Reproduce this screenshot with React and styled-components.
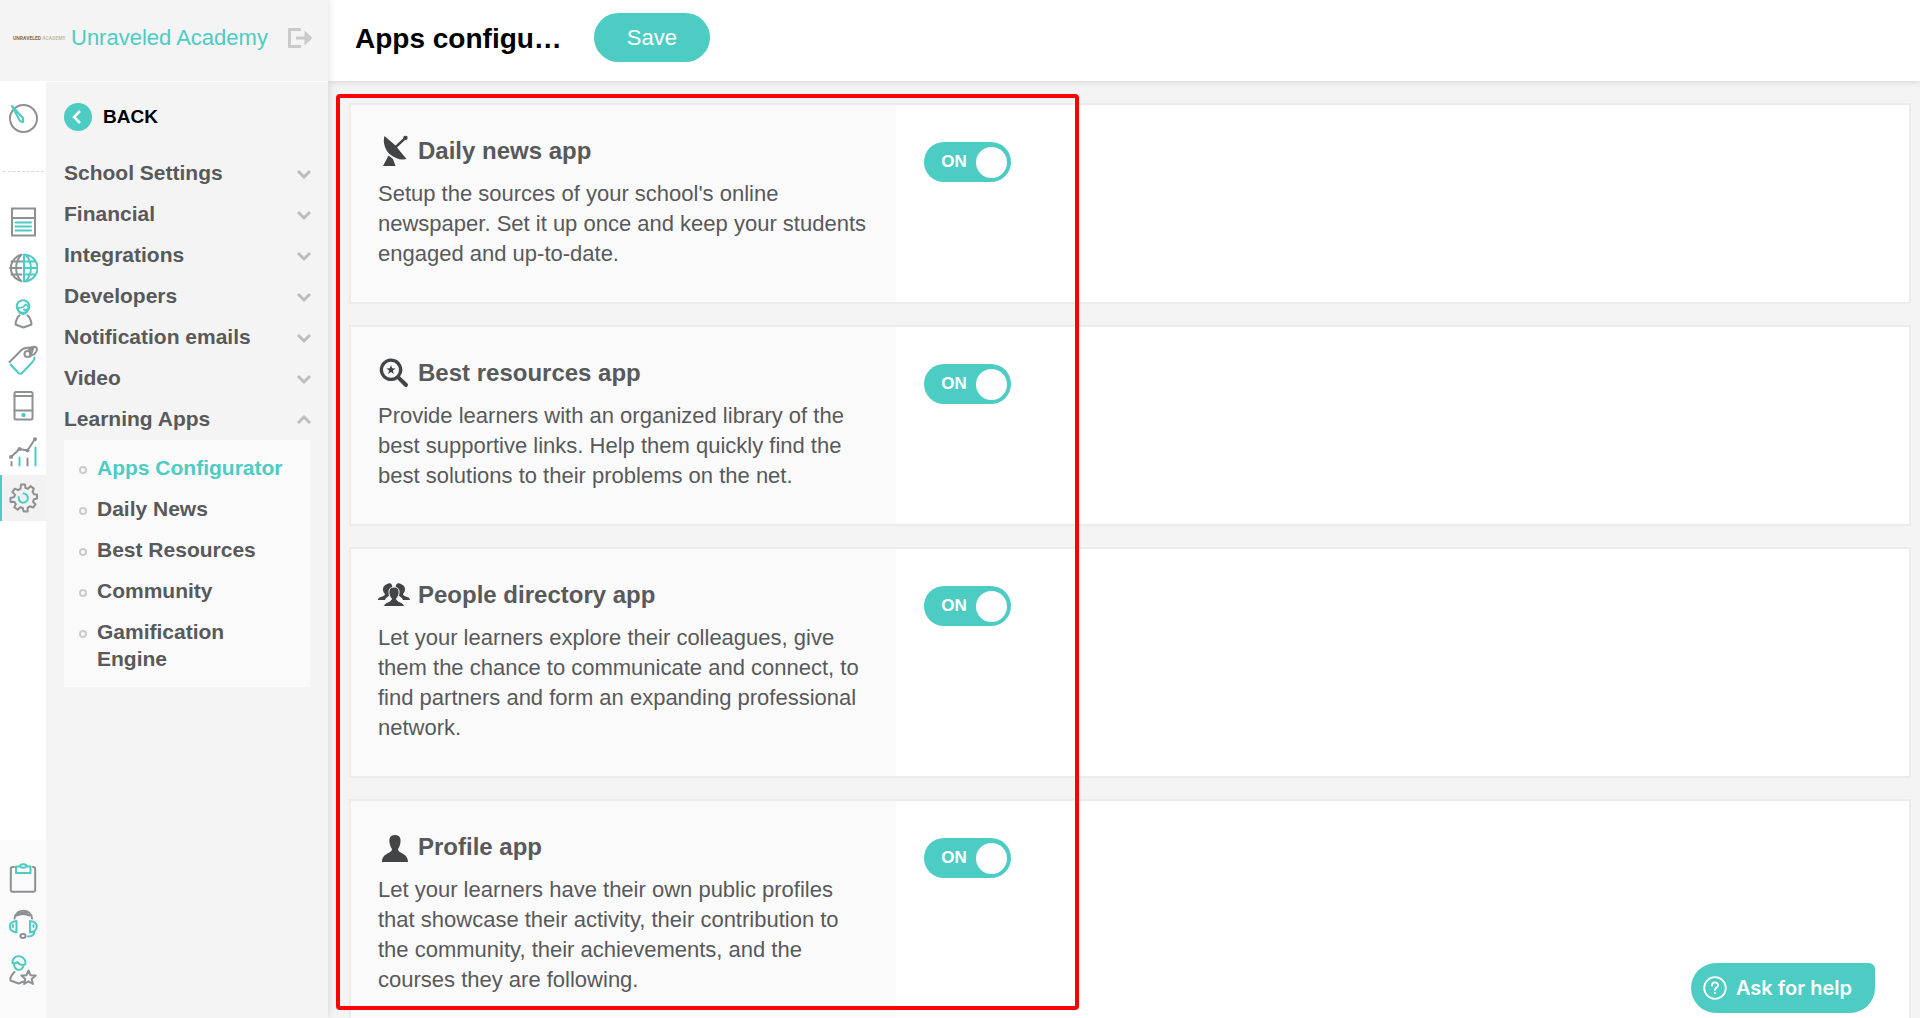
import { useState } from 'react'
import styled, { createGlobalStyle } from 'styled-components'

const colors = {
    primary: '#4dccc3',
    text: '#58595a',
    panel: '#f4f4f4',
    light: '#fafafa',
    border: '#ececec',
    grey: '#8e9093',
    muted: '#c3c3c3',
}

const GlobalStyle = createGlobalStyle`
    *, *::before, *::after {
        box-sizing: border-box;
    }
    body {
        margin: 0;
        font-family: "Helvetica Neue", "Liberation Sans", Arial, sans-serif;
        color: ${colors.text};
    }
    a {
        color: inherit;
        text-decoration: none;
    }
    button {
        font-family: inherit;
        border: none;
        cursor: pointer;
    }
`

const Page = styled.div`
    display: flex;
    height: 100vh;
    overflow: hidden;
    background: ${colors.panel};
`

const Sidebar = styled.aside`
    display: flex;
    flex-direction: column;
    flex: 0 0 328px;
    background: ${colors.panel};
    box-shadow: 0 0 8px rgba(0, 0, 0, 0.14);
    z-index: 2;
`

const SchoolBar = styled.div`
    display: flex;
    align-items: center;
    height: 82px;
    padding: 0 15px 6px 13px;
    border-bottom: 1px solid #fff;
`

const Logo = styled.span`
    flex: 0 0 58px;
    font-family: Roboto, "Liberation Sans", sans-serif;
    font-size: 5px;
    font-weight: bold;
    line-height: 6px;
    white-space: nowrap;
    color: #8a6d45;
    & > span {
        color: #c8bda9;
    }
`

const SchoolName = styled.a`
    flex: 1;
    font-size: 22px;
    line-height: 28px;
    white-space: nowrap;
    color: ${colors.primary};
`

const IconButton = styled.button`
    display: flex;
    padding: 0;
    background: none;
`

const SidebarBody = styled.div`
    display: flex;
    flex: 1;
    min-height: 0;
`

const Rail = styled.nav`
    display: flex;
    flex-direction: column;
    flex: 0 0 46px;
    background: #fff;
`

const RailTop = styled.div`
    display: flex;
    flex-direction: column;
    padding-top: 13px;
`

const RailDivider = styled.hr`
    width: 41px;
    margin: 30px auto 27px;
    border: none;
    border-top: 1px dashed #d8d8d8;
`

const RailBottom = styled.div`
    margin-top: auto;
    padding: 15px 0 25px;
    background: ${colors.light};
`

const RailLink = styled.a`
    display: flex;
    align-items: center;
    justify-content: center;
    height: 46px;
    background: ${({ $active }) => ($active ? '#f2f2f2' : 'transparent')};
    box-shadow: ${({ $active }) => ($active ? `inset 2px 0 0 ${colors.primary}` : 'none')};
`

const LineIcon = styled.svg`
    width: 30px;
    height: 30px;
    fill: none;
    stroke: ${colors.grey};
    stroke-width: 2;
    stroke-linejoin: round;
    stroke-linecap: round;
    .teal {
        stroke: ${colors.primary};
    }
    .dot {
        fill: ${colors.primary};
        stroke: none;
    }
    .node {
        fill: ${colors.grey};
        stroke: none;
    }
`

const Menu = styled.nav`
    flex: 1;
    padding: 0 18px;
`

const BackLink = styled.a`
    display: flex;
    align-items: center;
    gap: 11px;
    height: 70px;
    font-size: 19px;
    font-weight: bold;
    color: #000;
`

const MenuButton = styled.button`
    display: flex;
    align-items: center;
    justify-content: space-between;
    width: 100%;
    height: 41px;
    padding: 0;
    background: none;
    font-size: 21px;
    font-weight: bold;
    color: ${colors.text};
    & > svg {
        margin-right: -3px;
    }
`

const SubMenu = styled.ul`
    display: flex;
    flex-direction: column;
    gap: 14px;
    margin: 1px 0 0;
    padding: 14px 15px 15px;
    list-style: none;
    background: ${colors.light};
`

const SubMenuItem = styled.li`
    display: flex;
    gap: 10px;
    font-size: 21px;
    font-weight: bold;
    line-height: 27px;
    color: ${({ $active }) => ($active ? colors.primary : colors.text)};
    &::before {
        content: "";
        flex: 0 0 8px;
        height: 8px;
        margin-top: 12px;
        border: 2px solid #cbcbcb;
        border-radius: 50%;
    }
`

const Main = styled.main`
    display: flex;
    flex-direction: column;
    flex: 1;
    min-width: 0;
`

const TopBar = styled.header`
    display: flex;
    align-items: flex-start;
    gap: 32px;
    height: 81px;
    padding: 13px 27px;
    background: #fff;
    box-shadow: 0 0 8px rgba(0, 0, 0, 0.16);
    z-index: 1;
`

const Title = styled.h1`
    margin: 0;
    font-size: 28px;
    line-height: 51px;
    white-space: nowrap;
    color: #000;
`

const SaveButton = styled.button`
    width: 116px;
    height: 49px;
    border-radius: 25px;
    background: ${colors.primary};
    font-size: 22px;
    color: #fff;
`

const AppList = styled.div`
    display: flex;
    flex-direction: column;
    flex: 1;
    gap: 21px;
    min-height: 0;
    padding: 22px 9px 22px 21px;
    overflow-y: auto;
    scrollbar-width: none;
`

const Card = styled.section`
    display: flex;
    flex-shrink: 0;
    border: 2px solid ${colors.border};
    background: #fff;
`

const CardInfo = styled.div`
    width: 35%;
    padding: 30px 27px 33px;
    background: ${colors.light};
`

const CardTitle = styled.h2`
    display: flex;
    align-items: center;
    gap: 8px;
    margin: 0 0 12px;
    font-size: 24px;
    line-height: 32px;
    & > svg {
        fill: #434445;
    }
`

const CardText = styled.p`
    margin: 0;
    font-size: 22px;
    line-height: 30px;
`

const CardControl = styled.div`
    flex: 1;
    padding: 37px 28px;
`

const Switch = styled.label`
    position: relative;
    display: flex;
    align-items: center;
    justify-content: space-between;
    flex-direction: ${({ $on }) => ($on ? 'row' : 'row-reverse')};
    width: 87px;
    height: 40px;
    padding: ${({ $on }) => ($on ? '0 4px 0 17px' : '0 13px 0 4px')};
    border-radius: 20px;
    background: ${({ $on }) => ($on ? colors.primary : colors.muted)};
    font-size: 17px;
    font-weight: bold;
    color: #fff;
    cursor: pointer;
    & > input {
        position: absolute;
        inset: 0;
        width: 100%;
        height: 100%;
        margin: 0;
        opacity: 0;
        cursor: pointer;
    }
    &::after {
        content: "";
        width: 31px;
        height: 31px;
        border-radius: 50%;
        background: #fff;
    }
`

const Highlight = styled.div`
    position: fixed;
    top: 94px;
    left: 336px;
    width: 743px;
    bottom: 8px;
    border: 4px solid #f00;
    border-radius: 4px;
    pointer-events: none;
    z-index: 3;
`

const HelpButton = styled.button`
    position: fixed;
    right: 45px;
    bottom: 5px;
    display: flex;
    align-items: center;
    gap: 9px;
    height: 50px;
    padding: 0 23px 0 12px;
    border-radius: 25px 6px 25px 25px;
    background: ${colors.primary};
    font-family: Inter, sans-serif;
    font-size: 20px;
    font-weight: 600;
    color: #fff;
    z-index: 4;
`

const railIcons = {
    dashboard: (
        <>
            <circle cx="15.5" cy="15.5" r="13.5" />
            <path className="teal" d="M4 3l11 12v4l-3-1z" />
        </>
    ),
    pages: (
        <>
            <path d="M4 1.500h23v27H4zM4 11h23" strokeLinejoin="miter" />
            <path className="teal" d="M7.500 15.500h15.500M7.500 19.500h15.500M7.500 23.500h15.500" />
        </>
    ),
    globe: (
        <>
            <path d="M13.500 1.800a13.500 13.500 0 0 0 0 26.400M13 2c-6.500 7-6.500 19 0 26M3.500 8.500h10M2 15h11.500M3.500 21.500h10" />
            <path className="teal" d="M16 1.500v27a13.500 13.500 0 0 0 0-27M18 2c6.500 7 6.500 19 0 26M13.500 8.500H27M16 15h13.500M16 21.500h11" />
        </>
    ),
    user: (
        <>
            <circle className="teal" cx="15" cy="7.500" r="6.300" />
            <path className="teal" d="M9.500 9c4 0 7-1 8-3.500l3.500 2c-1 3-3 4-5 3M10 10.500c1 3 3.500 4.500 5 4.500s4-1.500 5-4.500" />
            <path d="M11.500 16.500c-2 1-4 6-4 9l8 3 8-3c0-3-2-8-4-9" />
        </>
    ),
    tag: (
        <>
            <path d="M1.500 17L14 4.500c2-1.500 5-2.500 11-2M25.500 2.500l-3 9" />
            <circle cx="19.500" cy="9" r="3" />
            <path d="M20 6c2-3 5-4.500 7.500-4 2.500 1 1.500 4.500-1 7-2 1.500-4 1.500-4.500-.5s1-4 3-5" />
            <path className="teal" d="M2.500 19.500l8 8.500c1 1 2.500 1 3.500 0L24 17.500c1.500-1.500 2.500-3 2.500-5" />
        </>
    ),
    mobile: (
        <>
            <rect x="6.500" y="1" width="18" height="27.500" rx="1.500" />
            <path d="M6.500 5h18M6.500 19.500h18" />
            <circle className="dot" cx="15.500" cy="24" r="2.200" />
        </>
    ),
    chart: (
        <>
            <path d="M3 20l8.500-8 8 1.500L27 2M3.500 25v3.500M19.500 21.500v7" />
            <path className="teal" d="M11.500 20.500v8M27.500 10.500v18" />
            <circle className="node" cx="3" cy="20" r="2" />
            <circle className="node" cx="11.500" cy="12" r="2" />
            <circle className="node" cx="19.500" cy="13.500" r="2" />
            <circle className="node" cx="27" cy="2.200" r="2" />
        </>
    ),
    settings: (
        <>
            <path d="M13 1.500h4l.5 3.500 2.500.800 2.500-2.700 3.400 2.500L24.500 9l1.500 2.200 3 .300v4l-3.200.8-.8 2.500 2.500 2.400-2.400 3.400-3.300-1.300-2.200 1.500.1 3.700h-4l-1-3.500-2.500-.8-2.500 2.600-3.400-2.500 1.500-3.300-1.500-2.300-3.800.3v-4l3.600-.9.900-2.500-2.600-2.500 2.400-3.400 3.300 1.500 2.400-1.500z" />
            <path className="teal" d="M15.500 10.500a4.600 4.600 0 1 1-4.700 3.500" />
        </>
    ),
    clipboard: (
        <>
            <path d="M6 4H4.500c-1 0-1.700.7-1.700 1.700V27c0 1 .7 1.700 1.700 1.700h21c1 0 1.700-.7 1.700-1.700V5.700c0-1-.7-1.700-1.700-1.700H25" />
            <path className="teal" d="M8 3.500h4c0-3 6.500-3 6.500 0h4V10H8zM12 3.500c1 1.500 5.500 1.500 6.500 0" />
        </>
    ),
    support: (
        <>
            <path d="M6.500 9.500C8 -1 23-1 24 9.500M8.500 6.500c4-2 9-2 13 0M11 4.500c3-1 6-1 8 0" />
            <path className="teal" d="M8.500 12v11.500C-.5 22-.5 13 8.500 12zM22 12v11.500C31 22 31 13 22 12zM5 16v2M25.500 16v2M26.500 21.500c0 4-2 6-6.500 6" />
            <ellipse cx="15" cy="27" rx="2.600" ry="2" />
        </>
    ),
    ambassador: (
        <>
            <path className="teal" d="M4.500 8c-1-9 13-9 13 0 0 2-1 2-2 2-3 0-5-1-6-3-1 1-3 1.500-5 1M6 9.500c1 7 8 7 9.500 1" />
            <path d="M6.500 17c-3 3-4.500 6.500-4 8.500l8 3 5-2M20.500 15.500l2 4.700 5.200.400-4 3.400 1.200 5-4.400-2.700-4.400 2.700 1.200-5-4-3.400 5.200-.4z" />
        </>
    ),
}

const appIcons = {
    dish: (
        <path d="M6.500 1C4.500 7 7 14.500 11.500 19c5 4.500 12 6.500 17 5L19 12.500l8-7.500a2.200 2.200 0 1 0-1.700-1.800L17.500 10.500zM10.500 20.500L5 31h12.500l-2.500-7z" />
    ),
    search: (
        <path fillRule="evenodd" d="M13 1.500a11.300 11.300 0 1 0 6.300 20.700l7.200 7.300c2.200 1.500 4.500-.8 3-3l-7.400-7A11.300 11.300 0 0 0 13 1.500zm0 3.300a8 8 0 1 1 0 16 8 8 0 0 1 0-16zm0 3.200l1.200 3.300 3.500.1-2.800 2.200 1 3.400-2.900-2-2.900 2 1-3.400-2.800-2.200 3.500-.1z" />
    ),
    people: (
        <>
            <path d="M9 5c4-2 6 1 5 5-.5 2-1.500 4-2 5 0 2-4 3-5 6H0c0-4 7-3 7-6-3-3-3-8 2-10zM23 5c-4-2-6 1-5 5 .5 2 1.500 4 2 5 0 2 4 3 5 6h7c0-4-7-3-7-6 3-3 3-8-2-10z" />
            <path stroke="#fafafa" d="M16 8c4 0 5.500 3 5 6.500-.4 2.500-1.500 4-2.500 5 0 4 7.500 3 8 8H5.500c.5-5 8-4 8-8-1-1-2.100-2.500-2.500-5C10.500 11 12 8 16 8z" />
        </>
    ),
    person: (
        <path d="M17 4c4.500 0 6 3 5.500 7-.3 3-1.300 5.500-2.500 7 0 5 10 3.500 10 13H4c0-9.500 10-8 10-13-1.200-1.500-2.200-4-2.500-7C11 7 12.500 4 17 4z" />
    ),
}

const mainRail = [
    { icon: 'pages', label: 'Pages' },
    { icon: 'globe', label: 'Website' },
    { icon: 'user', label: 'Users' },
    { icon: 'tag', label: 'Sales' },
    { icon: 'mobile', label: 'Mobile' },
    { icon: 'chart', label: 'Reports' },
    { icon: 'settings', label: 'Settings', active: true },
]

const bottomRail = [
    { icon: 'clipboard', label: 'Tasks' },
    { icon: 'support', label: 'Support' },
    { icon: 'ambassador', label: 'Experts' },
]

const menu = ['School Settings', 'Financial', 'Integrations', 'Developers', 'Notification emails', 'Video', 'Learning Apps']

const learningApps = ['Apps Configurator', 'Daily News', 'Best Resources', 'Community', 'Gamification Engine']

const apps = [
    {
        icon: 'dish',
        name: 'Daily news app',
        text: "Setup the sources of your school's online newspaper. Set it up once and keep your students engaged and up-to-date.",
    },
    {
        icon: 'search',
        name: 'Best resources app',
        text: 'Provide learners with an organized library of the best supportive links. Help them quickly find the best solutions to their problems on the net.',
    },
    {
        icon: 'people',
        name: 'People directory app',
        text: 'Let your learners explore their colleagues, give them the chance to communicate and connect, to find partners and form an expanding professional network.',
    },
    {
        icon: 'person',
        name: 'Profile app',
        text: 'Let your learners have their own public profiles that showcase their activity, their contribution to the community, their achievements, and the courses they are following.',
    },
]

const RailItem = ({ icon, label, active }) => (
    <RailLink href="#" $active={active} aria-label={label}>
        <LineIcon viewBox="0 0 30 30">{railIcons[icon]}</LineIcon>
    </RailLink>
)

const Chevron = ({ up }) => (
    <svg width="18" height="14" viewBox="0 0 18 14" fill="none" stroke="#bdbdbd" strokeWidth="3">
        <path d={up ? 'M3 11l6-6 6 6' : 'M3 5l6 6 6-6'} />
    </svg>
)

const AppCard = ({ app }) => {
    const [on, setOn] = useState(true)

    return (
        <Card>
            <CardInfo>
                <CardTitle>
                    <svg width="32" height="32" viewBox="0 0 32 32">{appIcons[app.icon]}</svg>
                    {app.name}
                </CardTitle>
                <CardText>{app.text}</CardText>
            </CardInfo>
            <CardControl>
                <Switch $on={on}>
                    <input type="checkbox" aria-label={app.name} checked={on} onChange={(e) => setOn(e.target.checked)} />
                    {on ? 'ON' : 'OFF'}
                </Switch>
            </CardControl>
        </Card>
    )
}

const App = () => {
    const [open, setOpen] = useState('Learning Apps')

    return (
        <Page>
            <GlobalStyle />
            <Sidebar>
                <SchoolBar>
                    <Logo>UNRAVELED <span>ACADEMY</span></Logo>
                    <SchoolName href="#">Unraveled Academy</SchoolName>
                    <IconButton aria-label="Log out">
                        <svg width="26" height="22" viewBox="0 0 26 22" fill="none" stroke="#cacaca" strokeWidth="3">
                            <path d="M14 2.500H2.500v17H14M9 11h10" />
                            <path d="M17.500 3.500L25.500 11l-8 7.500z" fill="#cacaca" stroke="none" />
                        </svg>
                    </IconButton>
                </SchoolBar>
                <SidebarBody>
                    <Rail>
                        <RailTop>
                            <RailItem icon="dashboard" label="Dashboard" />
                            <RailDivider />
                            {mainRail.map((item) => <RailItem key={item.icon} {...item} />)}
                        </RailTop>
                        <RailBottom>
                            {bottomRail.map((item) => <RailItem key={item.icon} {...item} />)}
                        </RailBottom>
                    </Rail>
                    <Menu>
                        <BackLink href="#">
                            <svg width="28" height="28" viewBox="0 0 28 28">
                                <circle cx="14" cy="14" r="14" fill={colors.primary} />
                                <path d="M16 8l-6 6 6 6" fill="none" stroke="#fff" strokeWidth="2.500" />
                            </svg>
                            BACK
                        </BackLink>
                        {menu.map((name) => (
                            <MenuButton key={name} aria-expanded={open === name} onClick={() => setOpen(open === name ? '' : name)}>
                                {name}
                                <Chevron up={open === name} />
                            </MenuButton>
                        ))}
                        {open === 'Learning Apps' && (
                            <SubMenu>
                                {learningApps.map((name, i) => (
                                    <SubMenuItem key={name} $active={i === 0}>
                                        <a href="#">{name}</a>
                                    </SubMenuItem>
                                ))}
                            </SubMenu>
                        )}
                    </Menu>
                </SidebarBody>
            </Sidebar>
            <Main>
                <TopBar>
                    <Title>Apps configu…</Title>
                    <SaveButton type="button">Save</SaveButton>
                </TopBar>
                <AppList>
                    {apps.map((app) => <AppCard key={app.name} app={app} />)}
                </AppList>
            </Main>
            <Highlight />
            <HelpButton type="button">
                <svg width="24" height="24" viewBox="0 0 24 24" fill="none" stroke="#fff" strokeWidth="1.800" strokeLinecap="round">
                    <circle cx="12" cy="12" r="10.800" />
                    <path d="M9 9.500c0-4 6-4 6-.3 0 2.300-3 2.300-3 4.800M12 17v.2" />
                </svg>
                Ask for help
            </HelpButton>
        </Page>
    )
}

export default App
